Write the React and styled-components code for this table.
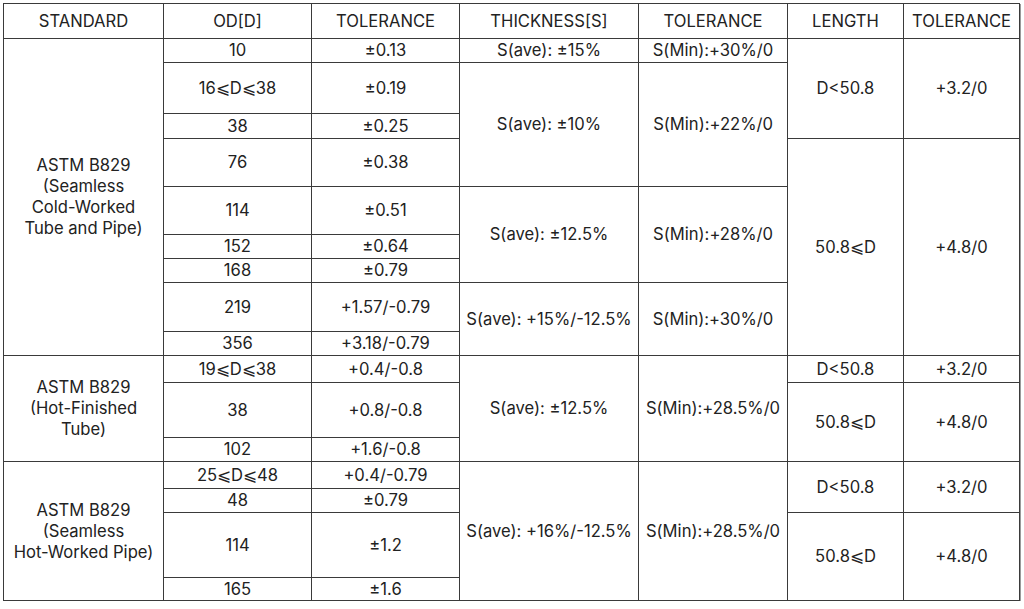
import React from "react";
import styled, { createGlobalStyle } from "styled-components";

const GlobalStyle = createGlobalStyle`
  html, body {
    margin: 0;
    padding: 0;
    background: #fff;
  }
  body {
    font-family: Inter, "Noto Sans", sans-serif;
    color: #222;
  }
`;

const Wrap = styled.div`
  padding: 3px 0 0 3px;
`;

const Table = styled.table`
  border-collapse: collapse;
  table-layout: fixed;
  width: 1017px;
  border: 1px solid #3a3a3a;
  box-shadow: 1px 1px 0 #9a9a9a;
  font-size: 16.6px;
`;

const Col = styled.col`
  width: ${(p) => p.w}px;
`;

const Row = styled.tr`
  height: ${(p) => p.h}px;
`;

const Head = styled.th`
  border: 1px solid #3a3a3a;
  font-weight: 400;
  text-align: center;
  padding: 0 2px;
  white-space: nowrap;
`;

const Cell = styled.td`
  border: 1px solid #3a3a3a;
  text-align: center;
  vertical-align: middle;
  padding: 0 2px;
  line-height: 19px;
  white-space: nowrap;
`;

const Standard = styled(Cell)`
  white-space: normal;
  line-height: 21px;
`;

const cols = [160, 148, 148, 179, 149, 116, 116];
const heads = ["STANDARD", "OD[D]", "TOLERANCE", "THICKNESS[S]", "TOLERANCE", "LENGTH", "TOLERANCE"];

export default function App() {
  return (
    <Wrap>
      <GlobalStyle />
      <Table>
        <colgroup>
          {cols.map((w, i) => (
            <Col key={i} w={w} />
          ))}
        </colgroup>
        <thead>
          <Row h={35}>
            {heads.map((h, i) => (
              <Head key={i}>{h}</Head>
            ))}
          </Row>
        </thead>
        <tbody>
          <Row h={24}>
            <Standard rowSpan={9}>
              ASTM B829
              <br />
              (Seamless
              <br />
              Cold-Worked
              <br />
              Tube and Pipe)
            </Standard>
            <Cell>10</Cell>
            <Cell>±0.13</Cell>
            <Cell>S(ave): ±15%</Cell>
            <Cell>S(Min):+30%/0</Cell>
            <Cell rowSpan={3}>D&lt;50.8</Cell>
            <Cell rowSpan={3}>+3.2/0</Cell>
          </Row>
          <Row h={51}>
            <Cell>16⩽D⩽38</Cell>
            <Cell>±0.19</Cell>
            <Cell rowSpan={3}>S(ave): ±10%</Cell>
            <Cell rowSpan={3}>S(Min):+22%/0</Cell>
          </Row>
          <Row h={25}>
            <Cell>38</Cell>
            <Cell>±0.25</Cell>
          </Row>
          <Row h={48}>
            <Cell>76</Cell>
            <Cell>±0.38</Cell>
            <Cell rowSpan={6}>50.8⩽D</Cell>
            <Cell rowSpan={6}>+4.8/0</Cell>
          </Row>
          <Row h={48}>
            <Cell>114</Cell>
            <Cell>±0.51</Cell>
            <Cell rowSpan={3}>S(ave): ±12.5%</Cell>
            <Cell rowSpan={3}>S(Min):+28%/0</Cell>
          </Row>
          <Row h={24}>
            <Cell>152</Cell>
            <Cell>±0.64</Cell>
          </Row>
          <Row h={24}>
            <Cell>168</Cell>
            <Cell>±0.79</Cell>
          </Row>
          <Row h={49}>
            <Cell>219</Cell>
            <Cell>+1.57/-0.79</Cell>
            <Cell rowSpan={2}>S(ave): +15%/-12.5%</Cell>
            <Cell rowSpan={2}>S(Min):+30%/0</Cell>
          </Row>
          <Row h={24}>
            <Cell>356</Cell>
            <Cell>+3.18/-0.79</Cell>
          </Row>

          <Row h={27}>
            <Standard rowSpan={3}>
              ASTM B829
              <br />
              (Hot-Finished
              <br />
              Tube)
            </Standard>
            <Cell>19⩽D⩽38</Cell>
            <Cell>+0.4/-0.8</Cell>
            <Cell rowSpan={3}>S(ave): ±12.5%</Cell>
            <Cell rowSpan={3}>S(Min):+28.5%/0</Cell>
            <Cell>D&lt;50.8</Cell>
            <Cell>+3.2/0</Cell>
          </Row>
          <Row h={55}>
            <Cell>38</Cell>
            <Cell>+0.8/-0.8</Cell>
            <Cell rowSpan={2}>50.8⩽D</Cell>
            <Cell rowSpan={2}>+4.8/0</Cell>
          </Row>
          <Row h={24}>
            <Cell>102</Cell>
            <Cell>+1.6/-0.8</Cell>
          </Row>

          <Row h={27}>
            <Standard rowSpan={4}>
              ASTM B829
              <br />
              (Seamless
              <br />
              Hot-Worked Pipe)
            </Standard>
            <Cell>25⩽D⩽48</Cell>
            <Cell>+0.4/-0.79</Cell>
            <Cell rowSpan={4}>S(ave): +16%/-12.5%</Cell>
            <Cell rowSpan={4}>S(Min):+28.5%/0</Cell>
            <Cell rowSpan={2}>D&lt;50.8</Cell>
            <Cell rowSpan={2}>+3.2/0</Cell>
          </Row>
          <Row h={24}>
            <Cell>48</Cell>
            <Cell>±0.79</Cell>
          </Row>
          <Row h={65}>
            <Cell>114</Cell>
            <Cell>±1.2</Cell>
            <Cell rowSpan={2}>50.8⩽D</Cell>
            <Cell rowSpan={2}>+4.8/0</Cell>
          </Row>
          <Row h={23}>
            <Cell>165</Cell>
            <Cell>±1.6</Cell>
          </Row>
        </tbody>
      </Table>
    </Wrap>
  );
}
